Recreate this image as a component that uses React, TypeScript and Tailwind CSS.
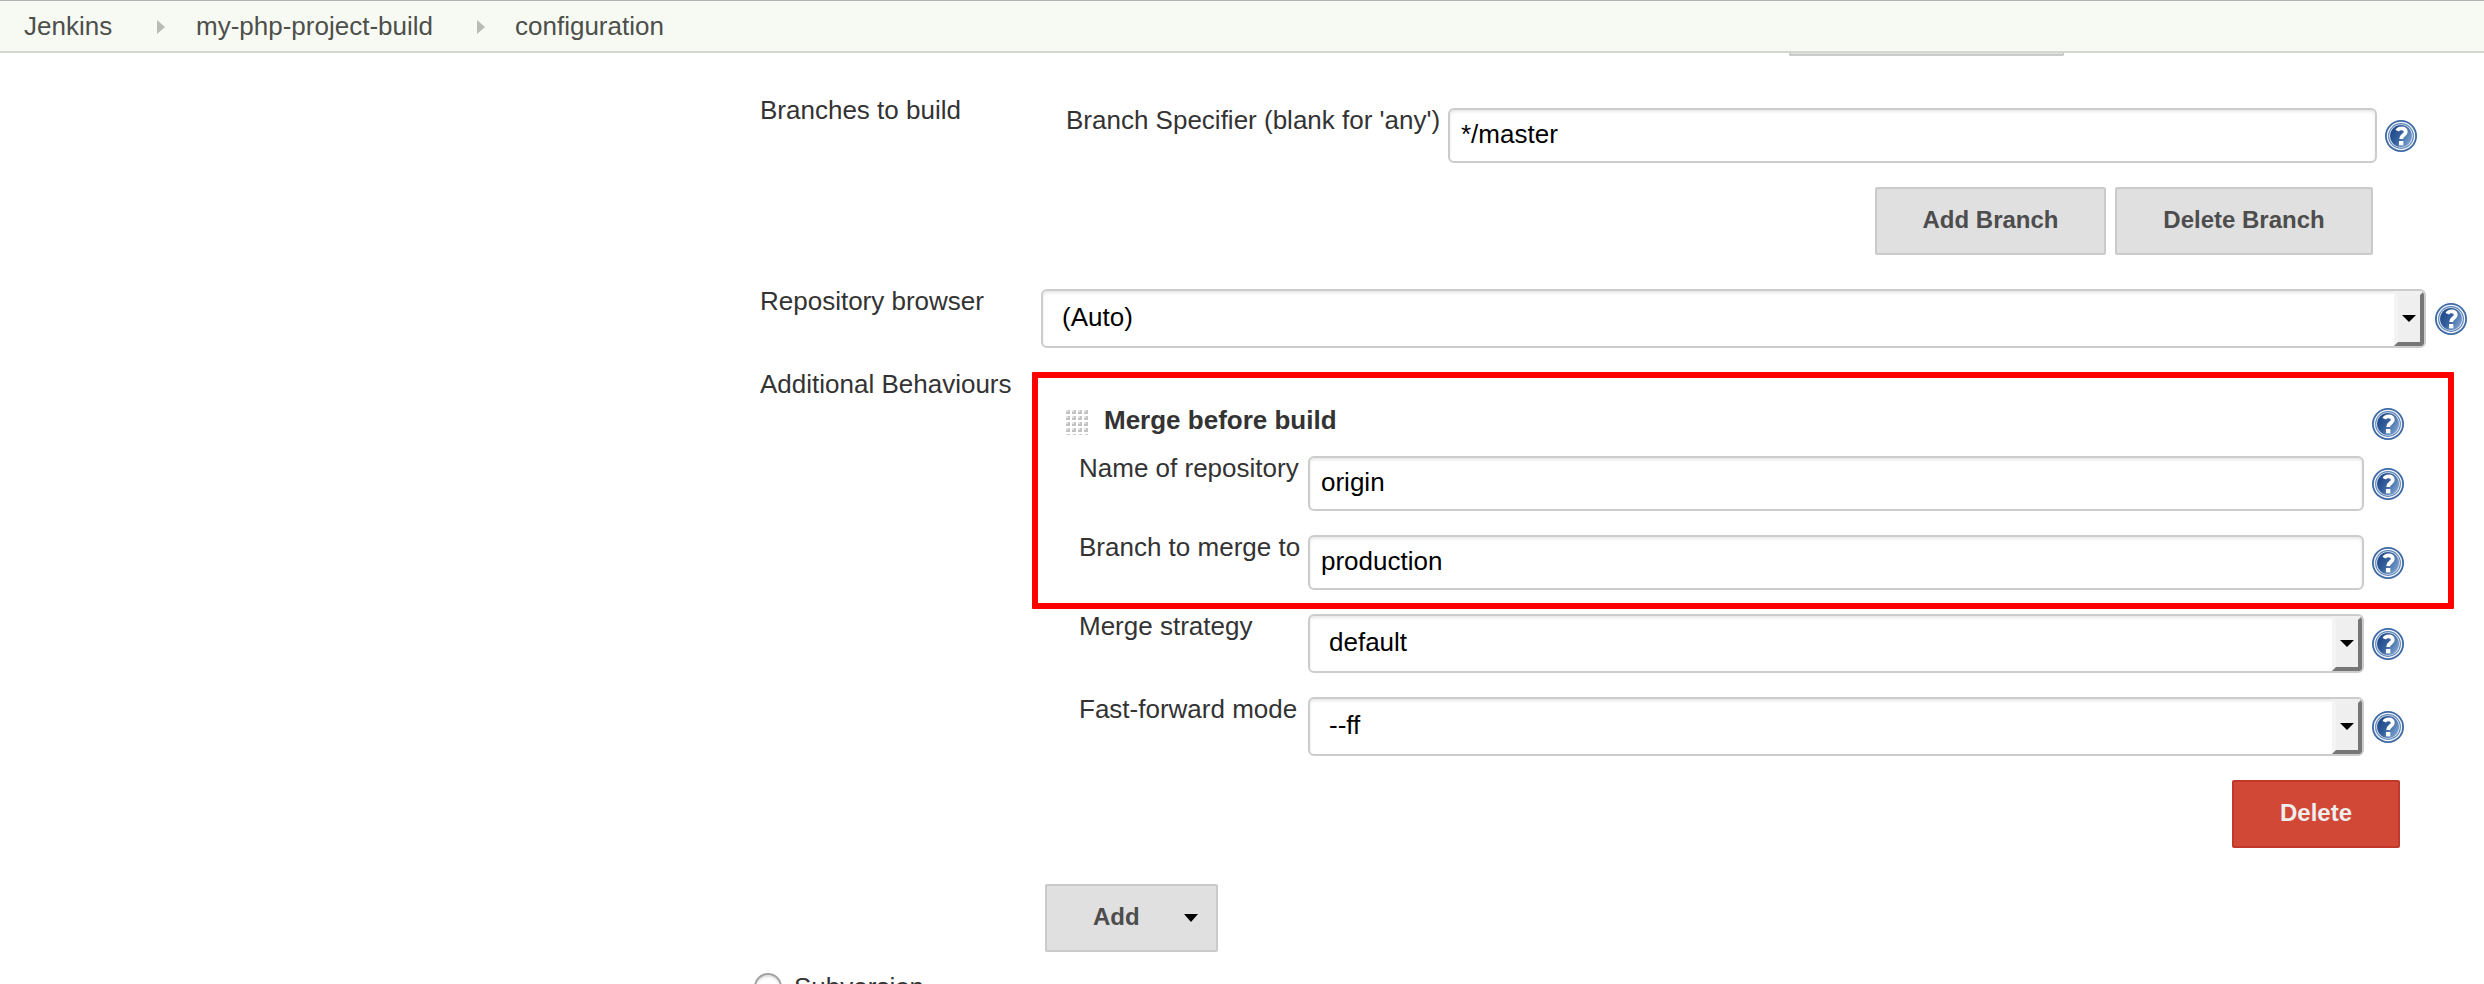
import React from "react";

function Help({ className = "" }: { className?: string }) {
  return (
    <svg viewBox="0 0 32 32" className={`h-8 w-8 shrink-0 ${className}`} role="img" aria-label="Help">
      <defs>
        <linearGradient id="helpFill" x1="0" y1="0.2" x2="1" y2="0.8">
          <stop offset="0" stopColor="#1c4586" />
          <stop offset="0.45" stopColor="#34609c" />
          <stop offset="1" stopColor="#83a8d4" />
        </linearGradient>
      </defs>
      <circle cx="16" cy="16" r="16" fill="#3d69a5" />
      <circle cx="16" cy="16" r="14.2" fill="#f2f6fb" />
      <circle cx="16" cy="16" r="12.9" fill="#5f84b8" />
      <circle cx="16" cy="16" r="11.8" fill="#dbe5f2" />
      <circle cx="16" cy="16" r="10.9" fill="url(#helpFill)" />
      <path d="M12.2 10.8C13 8.9 14.8 8.4 16.6 8.4C19.2 8.4 20.8 9.7 20.8 12C20.8 15 16.2 14.9 16.2 19" fill="none" stroke="#fff" strokeWidth="3.8" />
      <rect x="14" y="21" width="4.4" height="4.4" fill="#fff" />
    </svg>
  );
}

function Label({ children, className = "" }: { children: React.ReactNode; className?: string }) {
  return <div className={`h-[30px] shrink-0 leading-[30px] whitespace-nowrap ${className}`}>{children}</div>;
}

function TextInput({ value, className = "" }: { value: string; className?: string }) {
  return (
    <div className={`h-[55px] shrink-0 rounded-[6px] border-2 border-[#cccccc] bg-white pt-[9px] pl-[11px] leading-[30px] text-black shadow-[inset_0_2px_3px_rgba(0,0,0,0.09)] ${className}`}>
      {value}
    </div>
  );
}

function Select({ value, className = "" }: { value: string; className?: string }) {
  return (
    <div className={`flex h-[59px] shrink-0 justify-between overflow-hidden rounded-[6px] border-2 border-[#cccccc] bg-white text-black shadow-[inset_0_2px_3px_rgba(0,0,0,0.09)] ${className}`}>
      <span className="pt-[11px] pl-[19px] leading-[30px]">{value}</span>
      <span className="flex w-[30px] items-center justify-center rounded-tr-[4px] border-4 border-t-[#f0f0f0] border-r-[#777777] border-b-[#777777] border-l-[#f4f4f4] bg-[#efefef]">
        <svg viewBox="0 0 14 7" className="h-[7px] w-[14px] shrink-0">
          <path d="M0 0H14L7 7Z" />
        </svg>
      </span>
    </div>
  );
}

const button =
  "h-[68px] shrink-0 rounded-[2px] border-2 border-[#cacaca] bg-[#e0e0e0] pt-[17px] text-center text-[24px] leading-[28px] font-bold text-[#4d4d4d]";

function Crumb() {
  return (
    <svg viewBox="0 0 8 14" className="mt-[2px] h-[14px] w-[8px] shrink-0 fill-[#b9bbb7]">
      <path d="M0 0L8 7L0 14Z" />
    </svg>
  );
}

export default function App() {
  return (
    <div className="relative h-[984px] w-[2484px] overflow-hidden bg-white font-['Liberation_Sans',Arial,sans-serif] text-[26px] text-[#333333]">
      <header className="flex h-[53px] items-center border-t border-b-2 border-t-[#b3b3b3] border-b-[#d3d8cf] bg-[#f7faf3] text-[#4d4f4b]">
        <span className="w-[133px] pl-6 leading-[30px]">Jenkins</span>
        <span className="w-6 shrink-0" />
        <Crumb />
        <span className="w-[312px] pl-[31px] leading-[30px]">my-php-project-build</span>
        <Crumb />
        <span className="pl-[30px] leading-[30px]">configuration</span>
      </header>
      <div className="ml-[1789px] h-[3px] w-[275px] rounded-b-[2px] border-x-2 border-b-2 border-[#cacaca] bg-[#e0e0e0]" />

      <main className="flex flex-col pt-[39px] pl-[760px]">
        <div className="flex h-[92px] items-start">
          <Label className="w-[306px]">Branches to build</Label>
          <Label className="mt-[10px] w-[382px]">Branch Specifier (blank for 'any')</Label>
          <TextInput value="*/master" className="mt-[13px] w-[929px]" />
          <Help className="mt-[25px] ml-2" />
        </div>
        <div className="flex h-[98px] justify-end gap-[9px] pr-[111px]">
          <div className={`${button} w-[231px]`}>Add Branch</div>
          <div className={`${button} w-[258px]`}>Delete Branch</div>
        </div>
        <div className="flex h-[83px] items-start">
          <Label className="mt-px w-[281px]">Repository browser</Label>
          <Select value="(Auto)" className="mt-[4px] w-[1385px]" />
          <Help className="mt-[18px] ml-[9px]" />
        </div>

        <div className="flex h-[516px] items-start">
          <Label className="mt-px w-[306px]">Additional Behaviours</Label>
          <div className="flex w-[1338px] flex-col pt-[40px]">
            <div className="flex h-[45px] items-start">
              <svg viewBox="0 0 22 25" className="mt-[2px] h-[25px] w-[22px] shrink-0">
                {[0, 6, 12, 18].map((x) =>
                  [0, 6, 12, 18, 24].map((y) => (
                    <React.Fragment key={`${x}-${y}`}>
                      <rect x={x} y={y} width="4" height={y === 24 ? 1 : 4} fill="#e4e4e4" />
                      <rect x={x + 2} y={y} width="2" height={y === 24 ? 1 : 4} fill="#c6c6c6" />
                      {y < 24 && <rect x={x} y={y + 2} width="4" height="2" fill="#c2c2c2" />}
                    </React.Fragment>
                  )),
                )}
              </svg>
              <Label className="ml-[16px] -mt-[3px] font-bold">Merge before build</Label>
              <Help className="ml-auto" />
            </div>
            <div className="flex h-[79px] items-start pl-[13px]">
              <Label className="w-[229px]">Name of repository</Label>
              <TextInput value="origin" className="mt-[3px] w-[1056px]" />
              <Help className="mt-[15px] ml-2" />
            </div>
            <div className="flex h-[79px] items-start pl-[13px]">
              <Label className="w-[229px]">Branch to merge to</Label>
              <TextInput value="production" className="mt-[3px] w-[1056px]" />
              <Help className="mt-[15px] ml-2" />
            </div>
            <div className="flex h-[83px] items-start pl-[13px]">
              <Label className="w-[229px]">Merge strategy</Label>
              <Select value="default" className="mt-[3px] w-[1056px]" />
              <Help className="mt-[17px] ml-2" />
            </div>
            <div className="flex h-[86px] items-start pl-[13px]">
              <Label className="w-[229px]">Fast-forward mode</Label>
              <Select value="--ff" className="mt-[3px] w-[1056px]" />
              <Help className="mt-[17px] ml-2" />
            </div>
            <div className="flex justify-end pr-1">
              <div className="h-[68px] w-[168px] rounded-[2px] border-2 border-[#c0392b] bg-[#d14836] pt-[17px] text-center text-[24px] leading-[28px] font-bold text-[#eeeeee]">
                Delete
              </div>
            </div>
          </div>
        </div>

        <div className="flex h-[87px] pl-[285px]">
          <div className="flex h-[68px] w-[173px] items-start rounded-[2px] border-2 border-[#cacaca] bg-[#e0e0e0] pl-[46px] text-[24px] leading-[28px] font-bold text-[#4d4d4d]">
            <span className="mt-[17px] w-[91px]">Add</span>
            <svg viewBox="0 0 14 8" className="mt-[28px] h-[8px] w-[14px] shrink-0">
              <path d="M0 0H14L7 8Z" fill="#000" />
            </svg>
          </div>
        </div>
        <div className="-ml-[6px] flex items-start">
          <div className="mt-[2px] h-7 w-7 shrink-0 rounded-full border-2 border-[#a3a3a3] bg-white shadow-[inset_0_2px_2px_rgba(0,0,0,0.12)]" />
          <Label className="mt-px ml-3">Subversion</Label>
        </div>
      </main>

      {/* Highlight drawn over the merge settings */}
      <div className="pointer-events-none absolute top-[372px] left-[1032px] h-[237px] w-[1422px] rounded-[1px] border-[6px] border-[#ff0000]" />
    </div>
  );
}
